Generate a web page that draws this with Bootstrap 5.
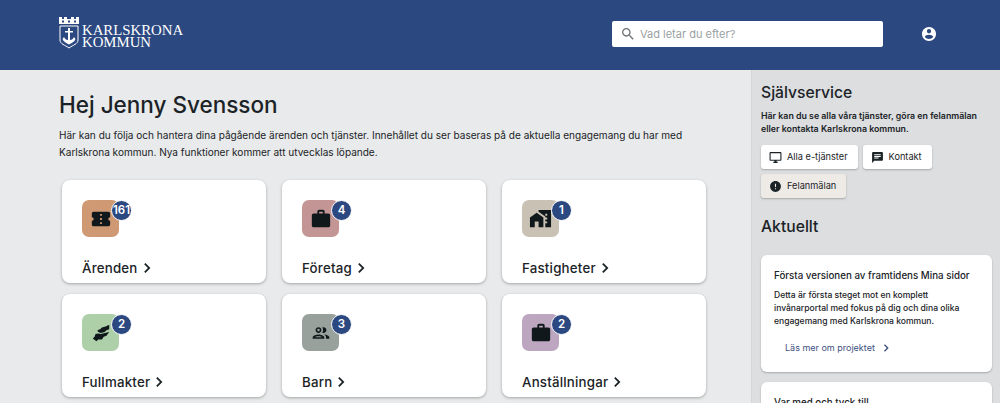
<!DOCTYPE html>
<html lang="sv">

<head>
    <title>Mina sidor</title>
    <link rel="stylesheet" href="https://cdn.jsdelivr.net/npm/bootstrap@5.3.0/dist/css/bootstrap.min.css">
    <style>
        body {
            height: 100vh;
            overflow: hidden;
            font-family: Inter, "Noto Sans", sans-serif;
            color: #1b2327;
            background-color: #e8eaeb;
        }

        svg {
            fill: currentColor;
            flex-shrink: 0;
        }

        .top-bar {
            height: 70px;
            background-color: #2c4880;
            padding: 0 59px 2px;
        }

        .logo-link {
            color: #fff;
            margin-top: -3px;
        }

        .logo-mark {
            width: 20px;
            height: 32px;
        }

        .logo-text {
            font-family: "Liberation Serif", serif;
            font-size: 14.800px;
            line-height: 12px;
            color: #fff;
            margin-left: 3px;
            margin-top: 7px;
        }

        .search-box {
            width: 271px;
            height: 26px;
            margin-left: auto;
            background-color: #fff;
            border-radius: 2px;
            padding-left: 8px;
            font-size: 11px;
            color: #9a9fa3;
            gap: 4px;
        }

        .search-box svg {
            color: #6e7377;
        }

        .user-icon {
            margin-left: 39px;
            margin-right: 5px;
            color: #fff;
        }

        .page-wrap {
            height: calc(100vh - 70px);
        }

        .main-col {
            width: 751px;
            padding: 21px 45px 0 59px;
        }

        .main-col h1 {
            font-size: 22.500px;
            font-weight: 500;
            line-height: 28px;
            margin-bottom: 8px;
        }

        .intro {
            font-size: 10.050px;
            line-height: 17px;
            margin-bottom: 19px;
        }

        .tiles {
            margin-left: -5px;
            --bs-gutter-x: 16px;
            --bs-gutter-y: 11px;
        }

        .tile {
            height: 103px;
            background-color: #fff;
            border-radius: 8px;
            box-shadow: 0 1px 3px rgba(0, 0, 0, .3);
            padding: 20px 20px 0;
        }

        .tile-icon {
            width: 37px;
            height: 37px;
            border-radius: 7px;
            color: #10181c;
        }

        .tile-count {
            top: 0;
            left: 29px;
            width: 21px;
            height: 21px;
            border-radius: 50%;
            border: 1px solid #fff;
            background-color: #2c4880;
            color: #fff;
            font-size: 11.500px;
            font-weight: 600;
        }

        .tile-name {
            margin-top: 22px;
            font-size: 13.300px;
            font-weight: 500;
            letter-spacing: .2px;
            line-height: 18px;
            gap: 6px;
        }

        .bg-ticket { background-color: #cf9a73; }
        .bg-company { background-color: #c39594; }
        .bg-house { background-color: #c9c2b4; }
        .bg-hands { background-color: #aed0a9; }
        .bg-kids { background-color: #98a19b; }
        .bg-job { background-color: #bda6bf; }

        .side-col {
            width: 249px;
            background-color: #dcdee0;
            padding: 13px 8px 0 9px;
            border-left: 1px solid #d3d5d7;
        }

        .side-col h2 {
            font-size: 15.700px;
            font-weight: 500;
            line-height: 20px;
            margin-bottom: 6px;
        }

        .side-lead {
            font-size: 8.800px;
            font-weight: 600;
            line-height: 13px;
            margin-bottom: 10px;
        }

        .svc-btn {
            height: 24px;
            background-color: #fff;
            border-radius: 3px;
            box-shadow: 0 1px 2px rgba(0, 0, 0, .25);
            font-size: 9.200px;
            padding: 0 10px 0 8px;
            gap: 5px;
        }

        .svc-btn.active-btn {
            background-color: #eeebe7;
        }

        .svc-list {
            gap: 5px;
            width: 231px;
        }

        .side-news {
            margin-top: 19px;
        }

        .side-col .side-news h2 {
            margin-bottom: 18px;
        }

        .news-card {
            width: 231px;
            background-color: #fff;
            border-radius: 6px;
            box-shadow: 0 1px 2px rgba(0, 0, 0, .25);
            padding: 14px 13px 17px;
            margin-bottom: 10px;
        }

        .news-card h3 {
            font-size: 9.750px;
            font-weight: 500;
            line-height: 14px;
            margin-bottom: 6px;
        }

        .news-card p {
            font-size: 8.550px;
            font-weight: 500;
            line-height: 13px;
            margin-bottom: 13px;
        }

        .news-link {
            font-size: 9px;
            color: #3d4f7f;
            text-decoration: none;
            margin-left: 11px;
            gap: 9px;
        }
    </style>
</head>

<body>
    <header class="top-bar d-flex align-items-center">
        <a class="logo-link d-flex align-items-start text-decoration-none" href="#">
            <svg class="logo-mark" viewBox="0 0 20 32">
                <path fill-rule="evenodd" d="M0 0h3v2h2V0h3v2h4V0h3v2h2V0h3v7H0zM3 3.500v2h2v-2zM9 3.500v2h2v-2zM15 3.500v2h2v-2z" />
                <path fill="none" stroke="#fff" stroke-width="1" d="M1 9h18v14c0 4-5 5-9 8-4-3-9-4-9-8z" />
                <path d="M9 11h2v3h3v1.500h-3V23c2 0 3-1 4-3l1.500 2c-1 3-4 4-6.500 5.500C7.500 26 4.500 25 3.500 22L5 20c1 2 2 3 4 3v-7.500H6V14h3z" />
            </svg>
            <span class="logo-text">KARLSKRONA<br>KOMMUN</span>
        </a>
        <div class="search-box d-flex align-items-center">
            <svg width="16" height="16" viewBox="0 0 24 24">
                <path d="M15.500 14h-.79l-.28-.27C15.410 12.590 16 11.110 16 9.500 16 5.910 13.090 3 9.500 3S3 5.910 3 9.500 5.910 16 9.500 16c1.610 0 3.090-.59 4.230-1.570l.27.28v.79l5 4.990L20.490 19l-4.990-5zm-6 0C7.010 14 5 11.990 5 9.500S7.010 5 9.500 5 14 7.010 14 9.500 11.990 14 9.500 14z" />
            </svg>
            <span>Vad letar du efter?</span>
        </div>
        <svg class="user-icon" width="14" height="14" viewBox="2 2 20 20">
            <path d="M12 2C6.480 2 2 6.480 2 12s4.480 10 10 10 10-4.480 10-10S17.520 2 12 2zm0 3c1.660 0 3 1.340 3 3s-1.340 3-3 3-3-1.340-3-3 1.340-3 3-3zm0 14.200c-2.500 0-4.710-1.280-6-3.220.03-1.990 4-3.080 6-3.080 1.990 0 5.970 1.090 6 3.080-1.290 1.940-3.500 3.220-6 3.220z" />
        </svg>
    </header>

    <div class="page-wrap d-flex">
        <main class="main-col">
            <h1>Hej Jenny Svensson</h1>
            <p class="intro">Här kan du följa och hantera dina pågående ärenden och tjänster. Innehållet du ser baseras på de aktuella engagemang du har med Karlskrona kommun. Nya funktioner kommer att utvecklas löpande.</p>
            <div class="row tiles">
                <div class="col-4">
                    <div class="tile">
                        <div class="tile-icon bg-ticket position-relative d-flex align-items-center justify-content-center">
                            <svg width="22" height="22" viewBox="0 0 24 24">
                                <path d="M22 10V6c0-1.110-.9-2-2-2H4c-1.100 0-1.990.89-1.990 2v4c1.100 0 1.990.9 1.990 2s-.89 2-2 2v4c0 1.100.9 2 2 2h16c1.100 0 2-.9 2-2v-4c-1.100 0-2-.9-2-2s.9-2 2-2zm-9 7.500h-2v-2h2v2zm0-4.500h-2v-2h2v2zm0-4.500h-2v-2h2v2z" />
                            </svg>
                            <span class="tile-count position-absolute d-flex align-items-center justify-content-center">161</span>
                        </div>
                        <div class="tile-name d-flex align-items-center">Ärenden
                            <svg width="7" height="10" viewBox="0 0 8 12"><path d="M1.500 0 7.500 6l-6 6L0 10.500 4.500 6 0 1.500z" /></svg>
                        </div>
                    </div>
                </div>
                <div class="col-4">
                    <div class="tile">
                        <div class="tile-icon bg-company position-relative d-flex align-items-center justify-content-center">
                            <svg width="22" height="22" viewBox="0 0 24 24">
                                <path d="M20 6h-4V4c0-1.110-.89-2-2-2h-4c-1.110 0-2 .89-2 2v2H4c-1.110 0-1.990.89-1.990 2L2 19c0 1.110.89 2 2 2h16c1.110 0 2-.89 2-2V8c0-1.110-.89-2-2-2zm-6 0h-4V4h4v2z" />
                            </svg>
                            <span class="tile-count position-absolute d-flex align-items-center justify-content-center">4</span>
                        </div>
                        <div class="tile-name d-flex align-items-center">Företag
                            <svg width="7" height="10" viewBox="0 0 8 12"><path d="M1.500 0 7.500 6l-6 6L0 10.500 4.500 6 0 1.500z" /></svg>
                        </div>
                    </div>
                </div>
                <div class="col-4">
                    <div class="tile">
                        <div class="tile-icon bg-house position-relative d-flex align-items-center justify-content-center">
                            <svg width="23" height="23" viewBox="0 0 24 24">
                                <path d="M1 11v10h5v-6h4v6h5V11L8 6z" />
                                <path d="M10 3v1.970l7 5V11h2v2h-2v2h2v2h-2v4h6V3H10zm9 6h-2V7h2v2z" />
                            </svg>
                            <span class="tile-count position-absolute d-flex align-items-center justify-content-center">1</span>
                        </div>
                        <div class="tile-name d-flex align-items-center">Fastigheter
                            <svg width="7" height="10" viewBox="0 0 8 12"><path d="M1.500 0 7.500 6l-6 6L0 10.500 4.500 6 0 1.500z" /></svg>
                        </div>
                    </div>
                </div>
                <div class="col-4">
                    <div class="tile">
                        <div class="tile-icon bg-hands position-relative d-flex align-items-center justify-content-center">
                            <svg width="22" height="22" viewBox="0 0 24 24">
                                <path d="M21 3v5l-3 1-2 2-4 1-3-1-1-2 3-1 2-2 4-1z" />
                                <path d="M21 11l-3 4-3 1-2 3h-4l-2 2-4-3 2-2 1-3 3-.5 3 .5 4-1z" />
                            </svg>
                            <span class="tile-count position-absolute d-flex align-items-center justify-content-center">2</span>
                        </div>
                        <div class="tile-name d-flex align-items-center">Fullmakter
                            <svg width="7" height="10" viewBox="0 0 8 12"><path d="M1.500 0 7.500 6l-6 6L0 10.500 4.500 6 0 1.500z" /></svg>
                        </div>
                    </div>
                </div>
                <div class="col-4">
                    <div class="tile">
                        <div class="tile-icon bg-kids position-relative d-flex align-items-center justify-content-center">
                            <svg width="20" height="20" viewBox="0 0 24 24">
                                <path d="M9 13.750c-2.340 0-7 1.170-7 3.500V19h14v-1.750c0-2.330-4.660-3.500-7-3.500zM4.340 17c.84-.58 2.870-1.250 4.660-1.250s3.820.67 4.660 1.250H4.340zM9 12c1.930 0 3.500-1.570 3.500-3.500S10.930 5 9 5 5.500 6.570 5.500 8.500 7.070 12 9 12zm0-5c.83 0 1.500.67 1.500 1.500S9.830 10 9 10s-1.500-.67-1.500-1.500S8.170 7 9 7zm7.040 6.810c1.160.84 1.960 1.960 1.960 3.440V19h4v-1.750c0-2.020-3.500-3.170-5.960-3.440zM15 12c1.930 0 3.500-1.570 3.500-3.500S16.930 5 15 5c-.54 0-1.040.13-1.500.35.63.89 1 1.980 1 3.150s-.37 2.260-1 3.150c.46.22.96.35 1.500.35z" />
                            </svg>
                            <span class="tile-count position-absolute d-flex align-items-center justify-content-center">3</span>
                        </div>
                        <div class="tile-name d-flex align-items-center">Barn
                            <svg width="7" height="10" viewBox="0 0 8 12"><path d="M1.500 0 7.500 6l-6 6L0 10.500 4.500 6 0 1.500z" /></svg>
                        </div>
                    </div>
                </div>
                <div class="col-4">
                    <div class="tile">
                        <div class="tile-icon bg-job position-relative d-flex align-items-center justify-content-center">
                            <svg width="22" height="22" viewBox="0 0 24 24">
                                <path d="M20 6h-4V4c0-1.110-.89-2-2-2h-4c-1.110 0-2 .89-2 2v2H4c-1.110 0-1.990.89-1.990 2L2 19c0 1.110.89 2 2 2h16c1.110 0 2-.89 2-2V8c0-1.110-.89-2-2-2zm-6 0h-4V4h4v2z" />
                            </svg>
                            <span class="tile-count position-absolute d-flex align-items-center justify-content-center">2</span>
                        </div>
                        <div class="tile-name d-flex align-items-center">Anställningar
                            <svg width="7" height="10" viewBox="0 0 8 12"><path d="M1.500 0 7.500 6l-6 6L0 10.500 4.500 6 0 1.500z" /></svg>
                        </div>
                    </div>
                </div>
            </div>
        </main>

        <aside class="side-col">
            <h2>Självservice</h2>
            <p class="side-lead">Här kan du se alla våra tjänster, göra en felanmälan eller kontakta Karlskrona kommun.</p>
            <div class="svc-list d-flex flex-wrap">
                <a class="svc-btn d-flex align-items-center text-reset text-decoration-none" href="#">
                    <svg width="13" height="13" viewBox="0 0 24 24"><path d="M21 2H3c-1.100 0-2 .9-2 2v12c0 1.100.9 2 2 2h7v2H8v2h8v-2h-2v-2h7c1.100 0 2-.9 2-2V4c0-1.100-.9-2-2-2zm0 14H3V4h18v12z" /></svg>
                    Alla e-tjänster
                </a>
                <a class="svc-btn d-flex align-items-center text-reset text-decoration-none" href="#">
                    <svg width="13" height="13" viewBox="0 0 24 24"><path d="M20 2H4c-1.100 0-1.990.9-1.990 2L2 22l4-4h14c1.100 0 2-.9 2-2V4c0-1.100-.9-2-2-2zM6 9h12v2H6V9zm8 5H6v-2h8v2zm4-6H6V6h12v2z" /></svg>
                    Kontakt
                </a>
                <a class="svc-btn active-btn d-flex align-items-center text-reset text-decoration-none" href="#">
                    <svg width="13" height="13" viewBox="0 0 24 24"><path d="M12 2C6.480 2 2 6.480 2 12s4.480 10 10 10 10-4.480 10-10S17.520 2 12 2zm1 15h-2v-2h2v2zm0-4h-2V7h2v6z" /></svg>
                    Felanmälan
                </a>
            </div>
            <div class="side-news">
                <h2>Aktuellt</h2>
                <div class="news-card">
                    <h3>Första versionen av framtidens Mina sidor</h3>
                    <p>Detta är första steget mot en komplett invånarportal med fokus på dig och dina olika engagemang med Karlskrona kommun.</p>
                    <a class="news-link d-flex align-items-center" href="#">Läs mer om projektet
                        <svg width="5" height="8" viewBox="0 0 8 12"><path d="M1.500 0 7.500 6l-6 6L0 10.500 4.500 6 0 1.500z" /></svg>
                    </a>
                </div>
                <div class="news-card">
                    <h3>Var med och tyck till</h3>
                </div>
            </div>
        </aside>
    </div>
</body>

</html>
